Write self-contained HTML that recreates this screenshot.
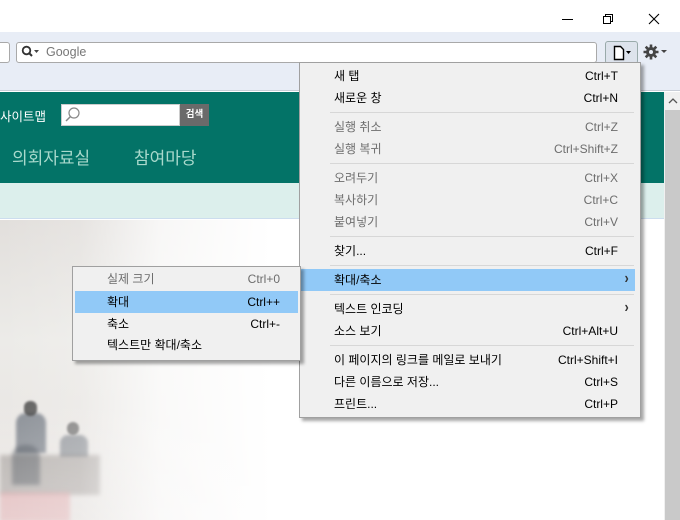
<!DOCTYPE html>
<html><head><meta charset="utf-8"><style>
*{margin:0;padding:0;box-sizing:border-box}
body{width:680px;height:520px;position:relative;overflow:hidden;background:#fff;font-family:"Liberation Sans","Noto Sans CJK KR","NanumGothic",sans-serif;font-size:12px;color:#000}
.a{position:absolute;white-space:nowrap}
.menu{position:absolute;background:#f0f0f0;border:1px solid #a0a0a0;box-shadow:3px 3px 3px rgba(0,0,0,.35)}
.r{position:absolute;left:0;right:0;height:22px;line-height:22px}
.r .t{position:absolute}
.r .k{position:absolute}
.ar{font-size:16px;line-height:20px;transform:scaleX(.8);font-weight:bold;color:#333}
.g{color:#6d6d6d}
.sep{position:absolute;height:1px;background:#d7d7d7}
.hl{background:#91c9f7}
</style></head><body>
<div class="a" style="left:0;top:0;width:680px;height:32px;background:#fff"></div>
<div class="a" style="left:562px;top:19px;width:11px;height:1px;background:#000"></div>
<div class="a" style="left:605px;top:14px;width:8px;height:8px;border:1px solid #000"></div>
<div class="a" style="left:603px;top:16px;width:8px;height:8px;border:1px solid #000;background:#fff"></div>
<svg class="a" style="left:648px;top:13px" width="12" height="12"><path d="M1 1L11 11M11 1L1 11" stroke="#000" stroke-width="1.1"/></svg>
<div class="a" style="left:0;top:32px;width:680px;height:59px;background:#e8edf6;border-bottom:1px solid #c9ced8"></div>
<div class="a" style="left:-6px;top:42px;width:16px;height:21px;border:1px solid #a9a9a9;border-radius:3px;background:#fff"></div>
<div class="a" style="left:16px;top:42px;width:581px;height:21px;border:1px solid #a9a9a9;border-radius:3px;background:#fff"></div>
<svg class="a" style="left:21px;top:45px" width="22" height="14"><circle cx="5.5" cy="5.5" r="3.8" fill="none" stroke="#333" stroke-width="1.8"/><path d="M8 8L11 11" stroke="#333" stroke-width="2"/><path d="M13 5h5l-2.5 3z" fill="#444"/></svg>
<div class="a" style="left:46px;top:45px;color:#777;font-size:12.5px">Google</div>
<div class="a" style="left:605px;top:41px;width:33px;height:23px;border:1px solid #9aa;border-radius:3px;background:#dde3ec"></div>
<svg class="a" style="left:613px;top:45px" width="24" height="16"><path d="M1.5 1.5h6l3 3v10h-9z" fill="#fff" stroke="#000" stroke-width="1.4"/><path d="M13 6h5l-2.5 3z" fill="#000"/></svg>
<svg class="a" style="left:643px;top:43px" width="28" height="18"><g transform="translate(8,9)"><circle r="5" fill="#444"/><g stroke="#444" stroke-width="2.6"><path d="M0-7.5V7.5M-7.5 0H7.5M-5.3-5.3L5.3 5.3M5.3-5.3L-5.3 5.3"/></g><circle r="2" fill="#e8edf6"/></g><path d="M18 7h6l-3 3z" fill="#444"/></svg>
<div class="a" style="left:0;top:92px;width:668px;height:91px;background:#037367"></div>
<div class="a" style="left:0;top:106px;color:#fff;font-size:12.5px">사이트맵</div>
<div class="a" style="left:61px;top:104px;width:119px;height:22px;background:#fff;border:1px solid #ccc"></div>
<svg class="a" style="left:64px;top:106px" width="18" height="18"><circle cx="10" cy="7" r="5" fill="none" stroke="#888" stroke-width="1.2"/><path d="M6.5 10.5L2 15" stroke="#888" stroke-width="1.5"/></svg>
<div class="a" style="left:180px;top:104px;width:29px;height:22px;background:#6a6a6a;color:#fff;font-size:9.5px;line-height:22px;text-align:center;font-weight:bold">검색</div>
<div class="a" style="left:12px;top:144px;color:#a9d9cc;font-size:17px">의회자료실</div>
<div class="a" style="left:134px;top:144px;color:#a9d9cc;font-size:17px">참여마당</div>
<div class="a" style="left:0;top:183px;width:668px;height:36px;background:#dcefec;border-bottom:1px solid #cde"></div>
<div class="a" style="left:664px;top:92px;width:16px;height:428px;background:#f0f0f0"></div>
<div class="a" style="left:665px;top:110px;width:15px;height:410px;background:#c9c9c9"></div>
<svg class="a" style="left:668px;top:97px" width="10" height="8"><path d="M1 6L5 2L9 6" fill="none" stroke="#555" stroke-width="1.3"/></svg>
<!-- photo approximation -->
<div class="a" style="left:0;top:220px;width:320px;height:300px;overflow:hidden">
 <div class="a" style="left:0;top:0;width:320px;height:300px;background:linear-gradient(180deg,#e2dfdc,#ecebe8 40%,#e9e6e3 75%,#e2dedb)"></div>
 <div class="a" style="left:16px;top:193px;width:30px;height:40px;background:#5e6672;border-radius:10px 10px 0 0;opacity:.7;filter:blur(1.5px)"></div>
 <div class="a" style="left:24px;top:181px;width:13px;height:15px;background:#3b3b3b;border-radius:6px;opacity:.8;filter:blur(1px)"></div>
 <div class="a" style="left:60px;top:215px;width:28px;height:22px;background:#555d68;border-radius:8px 8px 0 0;opacity:.55;filter:blur(1.5px)"></div>
 <div class="a" style="left:67px;top:202px;width:12px;height:13px;background:#444;border-radius:6px;opacity:.65;filter:blur(1px)"></div>
 <div class="a" style="left:0;top:235px;width:100px;height:40px;background:#6a625e;opacity:.4;filter:blur(2px)"></div>
 <div class="a" style="left:12px;top:225px;width:28px;height:40px;background:#3c434c;border-radius:12px 12px 0 0;opacity:.5;filter:blur(2px)"></div>
 <div class="a" style="left:0;top:272px;width:70px;height:30px;background:#d98a8f;opacity:.5;filter:blur(2px)"></div>
 <div class="a" style="left:0;top:0;width:320px;height:300px;background:linear-gradient(90deg,rgba(255,255,255,0) 0%,rgba(255,255,255,.15) 25%,rgba(255,255,255,.75) 50%,#fff 85%)"></div>
 <div class="a" style="left:0;top:0;width:320px;height:300px;background:linear-gradient(180deg,rgba(255,255,255,0) 60%,rgba(255,255,255,.35) 100%)"></div>
</div>
<div class="menu" style="left:299px;top:62px;width:342px;height:356px">
 <div class="r" style="top:2px"><span class="t" style="left:34px">새 탭</span><span class="k" style="right:22px">Ctrl+T</span></div>
 <div class="r" style="top:24px"><span class="t" style="left:34px">새로운 창</span><span class="k" style="right:22px">Ctrl+N</span></div>
 <div class="sep" style="top:49px;left:30px;right:6px"></div>
 <div class="r g" style="top:53px"><span class="t" style="left:34px">실행 취소</span><span class="k" style="right:22px">Ctrl+Z</span></div>
 <div class="r g" style="top:75px"><span class="t" style="left:34px">실행 복귀</span><span class="k" style="right:22px">Ctrl+Shift+Z</span></div>
 <div class="sep" style="top:100px;left:30px;right:6px"></div>
 <div class="r g" style="top:104px"><span class="t" style="left:34px">오려두기</span><span class="k" style="right:22px">Ctrl+X</span></div>
 <div class="r g" style="top:126px"><span class="t" style="left:34px">복사하기</span><span class="k" style="right:22px">Ctrl+C</span></div>
 <div class="r g" style="top:148px"><span class="t" style="left:34px">붙여넣기</span><span class="k" style="right:22px">Ctrl+V</span></div>
 <div class="sep" style="top:173px;left:30px;right:6px"></div>
 <div class="r" style="top:177px"><span class="t" style="left:34px">찾기...</span><span class="k" style="right:22px">Ctrl+F</span></div>
 <div class="sep" style="top:202px;left:30px;right:6px"></div>
 <div class="r hl" style="top:206px;right:5px"><span class="t" style="left:34px">확대/축소</span><span class="k ar" style="right:6px">›</span></div>
 <div class="sep" style="top:231px;left:30px;right:6px"></div>
 <div class="r" style="top:235px"><span class="t" style="left:34px">텍스트 인코딩</span><span class="k ar" style="right:11px">›</span></div>
 <div class="r" style="top:257px"><span class="t" style="left:34px">소스 보기</span><span class="k" style="right:22px">Ctrl+Alt+U</span></div>
 <div class="sep" style="top:282px;left:30px;right:6px"></div>
 <div class="r" style="top:286px"><span class="t" style="left:34px">이 페이지의 링크를 메일로 보내기</span><span class="k" style="right:22px">Ctrl+Shift+I</span></div>
 <div class="r" style="top:308px"><span class="t" style="left:34px">다른 이름으로 저장...</span><span class="k" style="right:22px">Ctrl+S</span></div>
 <div class="r" style="top:330px"><span class="t" style="left:34px">프린트...</span><span class="k" style="right:22px">Ctrl+P</span></div>
</div>
<div class="menu" style="left:72px;top:266px;width:229px;height:95px">
 <div class="r g" style="top:1px"><span class="t" style="left:34px">실제 크기</span><span class="k" style="right:20px">Ctrl+0</span></div>
 <div class="r hl" style="top:24px;left:2px;right:2px"><span class="t" style="left:32px">확대</span><span class="k" style="right:18px">Ctrl++</span></div>
 <div class="r" style="top:46px"><span class="t" style="left:34px">축소</span><span class="k" style="right:20px">Ctrl+-</span></div>
 <div class="r" style="top:67px"><span class="t" style="left:34px">텍스트만 확대/축소</span></div>
</div>
</body></html>
